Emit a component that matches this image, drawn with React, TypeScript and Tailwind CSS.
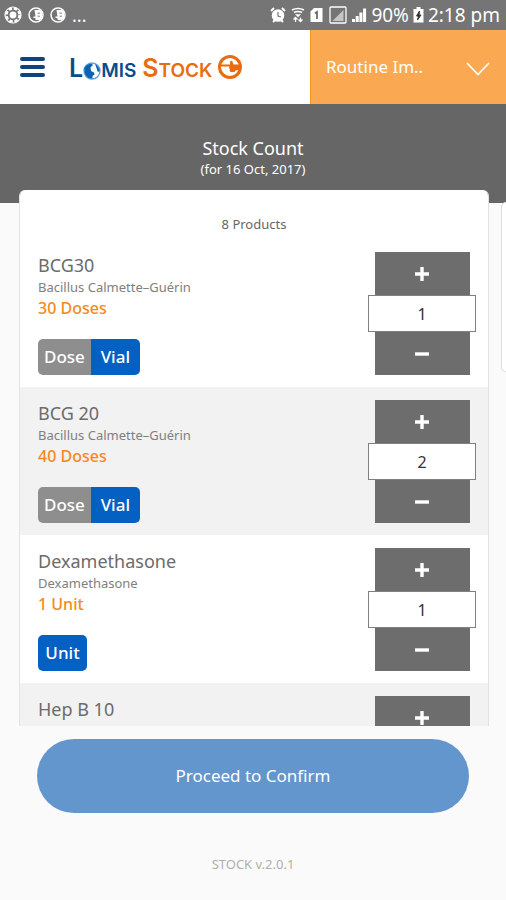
import { useState } from 'react';

type Product = {
  name: string;
  detail: string;
  amount: string;
  units: string[];
  count: string;
};

const products: Product[] = [
  { name: 'BCG30', detail: 'Bacillus Calmette–Guérin', amount: '30 Doses', units: ['Dose', 'Vial'], count: '1' },
  { name: 'BCG 20', detail: 'Bacillus Calmette–Guérin', amount: '40 Doses', units: ['Dose', 'Vial'], count: '2' },
  { name: 'Dexamethasone', detail: 'Dexamethasone', amount: '1 Unit', units: ['Unit'], count: '1' },
  { name: 'Hep B 10', detail: 'Hepatitis B', amount: '10 Doses', units: ['Dose', 'Vial'], count: '1' },
];

function HandBadge() {
  return (
    <svg viewBox="0 0 16 16" className="size-4" fill="none">
      <circle cx="8" cy="8" r="7" stroke="white" strokeWidth="1.5" />
      <path d="M6.500 3H12l2 2v6l-2 2H7.500v-2H5.500V9.500h2z" fill="white" />
      <path d="M9.500 6.200H12M9.500 9.200H12" stroke="#757575" strokeWidth="0.900" />
    </svg>
  );
}

function StatusBar() {
  return (
    <div className="flex h-[30px] shrink-0 items-center justify-between bg-[#757575] pr-[6px] pl-1 text-white">
      <div className="flex items-center gap-[6px]">
        <svg viewBox="0 0 18 18" className="size-[18px]" fill="none" stroke="white">
          <circle cx="9" cy="9" r="8" strokeWidth="1.2" />
          <circle cx="9" cy="9" r="6.5" strokeWidth="2.4" strokeDasharray="3.4 1.705" />
          <circle cx="9" cy="9" r="3.4" fill="white" stroke="none" />
        </svg>
        <HandBadge />
        <HandBadge />
        <span className="text-lg leading-none">...</span>
      </div>
      <div className="flex items-center gap-1">
        <svg viewBox="0 0 16 16" className="size-4">
          <circle cx="8" cy="8.5" r="6.3" fill="white" />
          <path d="M1 4l3-3M15 4l-3-3M3 15l2-2M13 15l-2-2" stroke="white" strokeWidth="2" />
          <path d="M8 5v4l3 1" stroke="#757575" strokeWidth="1.2" fill="none" />
        </svg>
        <svg viewBox="0 0 16 16" className="size-4" fill="none" stroke="white" strokeWidth="1.7">
          <path d="M2 3q6-3 12 0M4 5.500q4-2 8 0" />
          <path d="M5.500 7.500h5L8 10z" fill="white" strokeWidth="0.500" />
          <path d="M5.500 15v-4M3.500 12.500l2-2 2 2M10.500 10.500v4M8.500 12.500l2 2 2-2" strokeWidth="1.300" />
        </svg>
        <svg viewBox="0 0 13 16" className="h-4 w-[13px]">
          <path d="M4 1h8.500v14H.5V4.500z" fill="white" />
          <path d="M5 6.500l2-1.500v7" stroke="#666" strokeWidth="1.700" fill="none" />
        </svg>
        <svg viewBox="0 0 18 18" className="ml-[2px] size-[18px]">
          <rect x="1" y="1" width="16" height="16" rx="1" fill="none" stroke="white" strokeWidth="1.3" />
          <path d="M14.500 4v11h-11z" fill="#c4c4c4" />
        </svg>
        <svg viewBox="0 0 16 16" className="size-4" fill="white">
          <path d="M1 12h3v3H1zM4.700 9h3v6h-3zM8.400 5.500h3V15h-3zM12.100 1.500h3V15h-3z" />
        </svg>
        <span className="text-[19px] leading-none">90%</span>
        <svg viewBox="0 0 11 16" className="h-4 w-[11px]">
          <path d="M3.500 0h4v2H10.500v13.500H.5V2h3z" fill="white" />
          <path d="M6.500 4L3.500 9h2l-1 4 3.500-5h-2z" fill="#333" stroke="#333" />
        </svg>
        <span className="text-[19px] leading-none">2:18 pm</span>
      </div>
    </div>
  );
}

function Logo() {
  return (
    <a href="#" aria-label="Lomis Stock" className="flex items-center font-['Inter',sans-serif] font-semibold">
      <span className="flex items-baseline pt-1 text-[#0a4c8b]">
        <span className="text-[25px] leading-8">L</span>
        <svg viewBox="0 0 18 18" className="mb-[7px] size-[18px] self-end">
          <circle cx="9" cy="9" r="8" fill="white" stroke="#5fa3d9" strokeWidth="1.4" />
          <path
            d="M1.500 5.500Q4 2 8.500 1.800L10 3 7.500 5.500 8 9l3 1.500.5 2-2 1.500v2.500Q5 17 2.500 13 1 10 1.500 5.500zM12 2q4 2 4.800 7l-2 1-1.300-4z"
            fill="#0b63b0"
          />
        </svg>
        <span className="text-[19px] leading-8">MIS</span>
      </span>
      <span className="ml-[6px] flex items-baseline pt-1 text-[#ea6c10]">
        <span className="text-[25px] leading-8">S</span>
        <span className="text-[19px] leading-8">TOCK</span>
      </span>
      <svg viewBox="0 0 24 24" className="ml-[6px] size-6">
        <circle cx="12" cy="12" r="10.500" fill="white" stroke="#ea6c10" strokeWidth="3" />
        <path
          d="M3 9.500h9V6.500l2-1 1.500 4H21v5.500l-3.500.5-1 1.500h-4L11.500 15.500l.5-1-1-1.500.5-1.500H3z"
          fill="#ea6c10"
        />
      </svg>
    </a>
  );
}

function Header() {
  return (
    <header className="flex h-[74px] shrink-0 bg-white">
      <div className="flex flex-1 items-center gap-6 pl-5">
        <button type="button" aria-label="Menu" className="flex w-[25px] flex-col gap-1">
          <span className="h-1 rounded-full bg-[#0c4480]" />
          <span className="h-1 rounded-full bg-[#0c4480]" />
          <span className="h-1 rounded-full bg-[#0c4480]" />
        </button>
        <Logo />
      </div>
      <div className="relative w-[196px] border-l border-[#f7981d] bg-[#faa952] text-white">
        <select aria-label="Programme" className="size-full appearance-none pl-[15px] text-[17px]">
          <option>Routine Im..</option>
        </select>
        <svg
          viewBox="0 0 24 14"
          className="pointer-events-none absolute top-8 right-4 h-[14px] w-6"
          fill="none"
          stroke="white"
          strokeWidth="1.7"
        >
          <path d="M1 1l11 11.500L23 1" />
        </svg>
      </div>
    </header>
  );
}

function Stepper({ name, initial }: { name: string; initial: string }) {
  const [value, setValue] = useState(initial);
  const change = (by: number) => setValue(String(Math.max(0, Number(value) + by)));

  return (
    <div className="flex w-[108px] flex-col items-center">
      <button
        type="button"
        aria-label={`Add one ${name}`}
        onClick={() => change(1)}
        className="flex h-[43px] w-[95px] items-center justify-center bg-[#6d6d6d]"
      >
        <svg viewBox="0 0 14 14" className="size-[14px]" stroke="white" strokeWidth="3.4">
          <path d="M0 7h14M7 0v14" />
        </svg>
      </button>
      <input
        aria-label={`${name} count`}
        value={value}
        onChange={(e) => setValue(e.target.value)}
        className="h-[37px] w-full border border-[#808080] bg-white text-center text-base text-[#333]"
      />
      <button
        type="button"
        aria-label={`Remove one ${name}`}
        onClick={() => change(-1)}
        className="flex h-[43px] w-[95px] items-center justify-center bg-[#6d6d6d]"
      >
        <svg viewBox="0 0 14 14" className="size-[14px]" stroke="white" strokeWidth="3.4">
          <path d="M0 7h14" />
        </svg>
      </button>
    </div>
  );
}

function ProductRow({ product }: { product: Product }) {
  const [unit, setUnit] = useState(product.units[product.units.length - 1]);

  return (
    <li className="flex justify-between pt-[13px] pr-3 pb-3 pl-[18px] even:bg-[#f2f2f2]">
      <div className="flex flex-col items-start">
        <h2 className="text-lg leading-[26px] text-[#6b6b6b]">{product.name}</h2>
        <p className="text-[13px] leading-[18px] text-[#808080]">{product.detail}</p>
        <p className="text-base leading-6 font-medium text-[#f58a1c]">{product.amount}</p>
        <div className="mt-auto flex overflow-hidden rounded-[5px] text-[17px] font-medium text-white">
          {product.units.map((u) => (
            <button
              key={u}
              type="button"
              onClick={() => setUnit(u)}
              className={`h-9 min-w-[49px] px-[6px] ${u === unit ? 'bg-[#0560c3]' : 'bg-[#8e8e8e]'}`}
            >
              {u}
            </button>
          ))}
        </div>
      </div>
      <Stepper name={product.name} initial={product.count} />
    </li>
  );
}

export default function App() {
  return (
    <div className="flex h-screen flex-col bg-[#fafafa] font-['Noto_Sans',sans-serif]">
      <StatusBar />
      <Header />

      <div className="h-[99px] shrink-0 bg-[#666] pt-8 text-center text-white">
        <h1 className="text-lg leading-6">Stock Count</h1>
        <p className="text-[13px] leading-[18px]">(for 16 Oct, 2017)</p>
      </div>

      {/* Product cards, the next one peeks in on the right */}
      <main className="-mt-[13px] flex min-h-0 flex-1 gap-3 overflow-hidden pl-[19px]">
        <section className="min-w-0 flex-1 overflow-y-auto rounded-t-md border-x border-[#e2e2e2] bg-white [scrollbar-width:none]">
          <p className="pt-[25px] pb-[6px] text-center text-[13px] leading-[18px] text-[#666]">8 Products</p>
          <ul>
            {products.map((product) => (
              <ProductRow key={product.name} product={product} />
            ))}
          </ul>
        </section>
        <div className="mt-3 h-[170px] w-[5px] shrink-0 rounded-l-md border-y border-l border-[#ddd] bg-white" />
      </main>

      <footer className="shrink-0 px-[37px] pt-[13px] pb-[27px] text-center">
        <button type="button" className="h-[74px] w-full rounded-full bg-[#6296cd] text-[17px] text-white">
          Proceed to Confirm
        </button>
        <p className="mt-[42px] text-[13px] leading-[18px] text-[#b0b0b0]">STOCK v.2.0.1</p>
      </footer>
    </div>
  );
}
